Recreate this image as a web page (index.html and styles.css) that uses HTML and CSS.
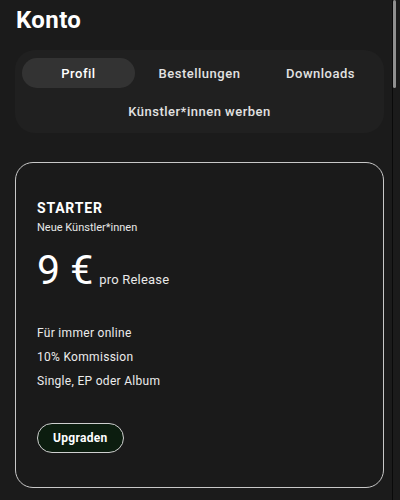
FILE: index.html
```html
<!DOCTYPE html>
<html lang="de">
<head>
<meta charset="utf-8">
<link rel="stylesheet" href="styles.css">
</head>
<body>
<div class="page">
  <h1 class="title">Konto</h1>
  <nav class="tabs">
    <div class="tab active">Profil</div>
    <div class="tab">Bestellungen</div>
    <div class="tab">Downloads</div>
    <div class="tab wide">Künstler*innen werben</div>
  </nav>
  <section class="card">
    <div class="plan">STARTER</div>
    <div class="sub">Neue Künstler*innen</div>
    <div class="price"><span class="amount">9 €</span><span class="unit">pro Release</span></div>
    <ul class="features">
      <li>Für immer online</li>
      <li>10% Kommission</li>
      <li>Single, EP oder Album</li>
    </ul>
    <button class="btn">Upgraden</button>
  </section>
</div>
<div class="scrollbar"><div class="thumb"></div></div>
</body>
</html>
```
FILE: styles.css
```css
html, body {
  margin: 0;
  padding: 0;
  background: #1b1b1b;
  color: #f2f2f2;
  font-family: Roboto, "Liberation Sans", sans-serif;
}
.page {
  padding: 4px 16px 12px 15px;
}
.title {
  margin: 0 0 0 1px;
  font-size: 24px;
  font-weight: 700;
  line-height: 32px;
  letter-spacing: 0.4px;
  color: #fff;
}
.tabs {
  margin-top: 14px;
  background: #202020;
  border-radius: 20px;
  padding: 8px 7px 7px 7px;
  display: grid;
  grid-template-columns: repeat(3, 1fr);
  column-gap: 8px;
  row-gap: 8px;
}
.tab {
  height: 30px;
  border-radius: 15px;
  display: flex;
  align-items: center;
  justify-content: center;
  font-size: 13px;
  font-weight: 500;
  letter-spacing: 0.5px;
  color: #e2e2e2;
}
.tab.active {
  background: #333333;
  color: #fff;
}
.tab.wide {
  grid-column: 1 / -1;
}
.card {
  margin-top: 29px;
  border: 1px solid #c8c8c8;
  border-radius: 18px;
  background: #1a1a1a;
  padding: 37px 21px 34px 21px;
}
.plan {
  font-size: 14px;
  font-weight: 700;
  letter-spacing: 0.8px;
  line-height: 16px;
  color: #fff;
}
.sub {
  margin-top: 5px;
  font-size: 11px;
  line-height: 14px;
  color: #e8e8e8;
}
.price {
  margin-top: 12px;
  display: flex;
  align-items: baseline;
  gap: 6px;
}
.amount {
  font-size: 41px;
  line-height: 46px;
  font-weight: 400;
  color: #fff;
}
.unit {
  font-size: 13px;
  letter-spacing: 0.2px;
  color: #e8e8e8;
}
.features {
  list-style: none;
  margin: 28px 0 0 0;
  padding: 0;
}
.features li {
  font-size: 12px;
  line-height: 24px;
  letter-spacing: 0.3px;
  color: #ececec;
}
.btn {
  margin-top: 30px;
  height: 30px;
  padding: 0 15px;
  border: 1px solid #cfcfcf;
  border-radius: 15px;
  background: #0c1d0f;
  color: #fff;
  font-family: Roboto, "Liberation Sans", sans-serif;
  font-size: 12px;
  font-weight: 700;
  letter-spacing: 0.3px;
}
.scrollbar {
  position: fixed;
  top: 0;
  right: 3px;
  width: 4px;
  height: 500px;
  border-left: 1px solid #0a0a0a;
}
.thumb {
  width: 3px;
  height: 88px;
  background: #8f8f8f;
  border-radius: 2px;
}
```
